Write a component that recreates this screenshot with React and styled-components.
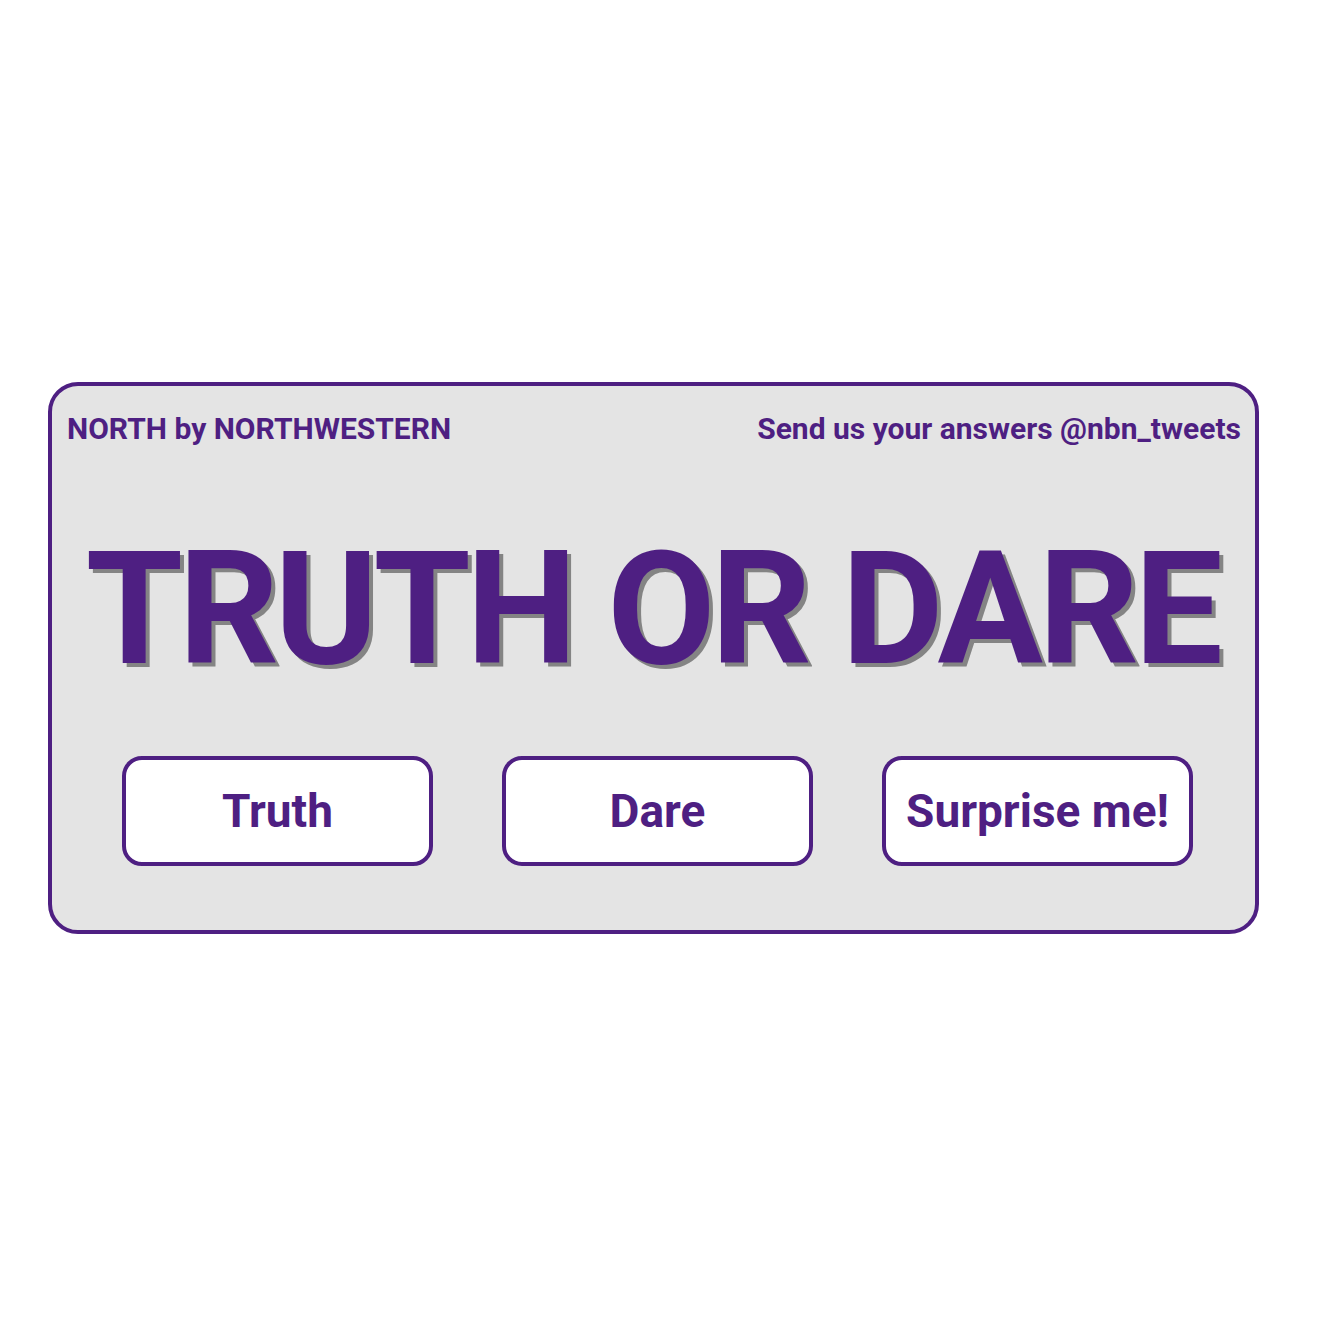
import React from 'react';
import styled, { createGlobalStyle } from 'styled-components';

const purple = '#4e1f82';

const Global = createGlobalStyle`
  body {
    margin: 0;
    background: #ffffff;
    font-family: Roboto, "Open Sans", sans-serif;
  }
`;

const Page = styled.div`
  width: 1326px;
  height: 1326px;
  padding: 382px 0 0 48px;
  box-sizing: border-box;
`;

const Card = styled.div`
  width: 1211px;
  height: 552px;
  box-sizing: border-box;
  background: #e4e4e4;
  border: 4px solid ${purple};
  border-radius: 30px;
  display: flex;
  flex-direction: column;
  padding: 23px 14px 0 15px;
`;

const Header = styled.div`
  display: flex;
  justify-content: space-between;
  align-items: baseline;
`;

const Tag = styled.span`
  color: ${purple};
  font-weight: 700;
  font-size: 30px;
  line-height: 40px;
`;

const Title = styled.h1`
  margin: 85px 0 0;
  text-align: center;
  white-space: nowrap;
  color: ${purple};
  font-family: Roboto, "Open Sans", sans-serif;
  font-weight: 700;
  font-size: 157px;
  line-height: 150px;
  letter-spacing: -4.5px;
  text-shadow: 4px 4px 0 #848484;
  padding-right: 4px;
`;

const Choices = styled.div`
  display: flex;
  gap: 69px;
  margin-top: 72px;
  padding-left: 55px;
`;

const Choice = styled.button`
  width: 311px;
  height: 110px;
  box-sizing: border-box;
  background: #ffffff;
  border: 4px solid ${purple};
  border-radius: 20px;
  color: ${purple};
  font-family: Roboto, "Open Sans", sans-serif;
  font-weight: 700;
  font-size: 46px;
  cursor: pointer;
`;

export default function App() {
  return (
    <Page>
      <Global />
      <Card>
        <Header>
          <Tag>NORTH by NORTHWESTERN</Tag>
          <Tag>Send us your answers @nbn_tweets</Tag>
        </Header>
        <Title>TRUTH OR DARE</Title>
        <Choices>
          <Choice>Truth</Choice>
          <Choice>Dare</Choice>
          <Choice>Surprise me!</Choice>
        </Choices>
      </Card>
    </Page>
  );
}
